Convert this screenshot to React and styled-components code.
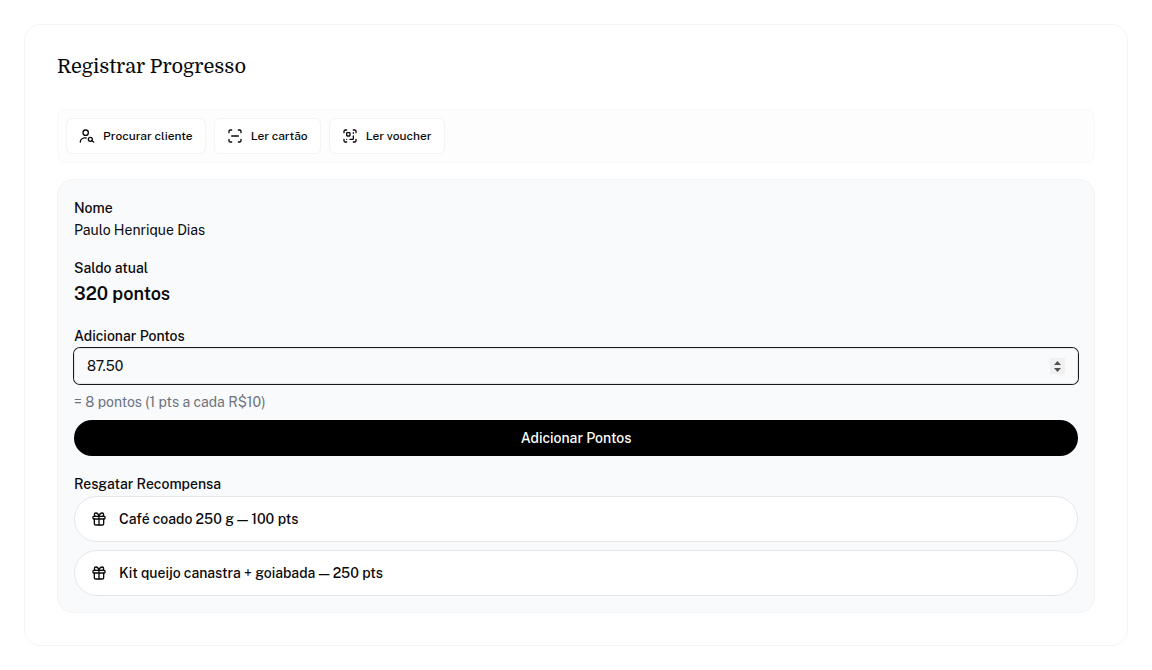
import React, { useState } from 'react'
import styled, { createGlobalStyle } from 'styled-components'
import { ScanLine, ScanQrCode, Gift } from 'lucide-react'

const GlobalStyle = createGlobalStyle`
  *, *::before, *::after {
    box-sizing: border-box;
  }

  body {
    margin: 0;
    background: #fff;
    color: #09090b;
    font-family: 'Public Sans', Inter, 'Liberation Sans', sans-serif;
    font-size: 14px;
    line-height: 20px;
  }

  button, input {
    font: inherit;
    color: inherit;
  }

  button {
    cursor: pointer;
  }
`

const Page = styled.main`
  padding: 24px;
`

const Card = styled.section`
  padding: 24px 32px 32px;
  border: 1px solid #f4f4f5;
  border-radius: 16px;
`

const Title = styled.h1`
  margin: 0 0 24px;
  font-family: Domine, 'Noto Serif', 'DejaVu Serif', serif;
  font-size: 20px;
  font-weight: 400;
  line-height: 36px;
`

const Toolbar = styled.div`
  display: flex;
  flex-wrap: wrap;
  gap: 8px;
  margin-bottom: 16px;
  padding: 8px;
  border: 1px solid #f8f8f9;
  border-radius: 8px;
  background: #fdfdfd;
`

const ToolButton = styled.button`
  display: flex;
  align-items: center;
  gap: 8px;
  height: 36px;
  padding: 0 12px;
  border: 1px solid #f4f4f5;
  border-radius: 6px;
  background: #fff;
  font-size: 12px;
  font-weight: 500;
`

const Panel = styled.form`
  display: flex;
  flex-direction: column;
  gap: 16px;
  padding: 16px;
  border: 1px solid #f3f4f6;
  border-radius: 16px;
  background: #f9fafb;
`

const Field = styled.div`
  display: flex;
  flex-direction: column;
`

const Label = styled.label`
  font-weight: 500;
  line-height: 24px;
`

const Value = styled.span`
  font-size: ${props => (props.$large ? '18px' : '14px')};
  font-weight: ${props => (props.$large ? 600 : 400)};
  line-height: ${props => (props.$large ? '28px' : '20px')};
`

const spinner = `url("data:image/svg+xml,%3Csvg xmlns='http://www.w3.org/2000/svg' viewBox='0 0 15 16'%3E%3Cpath fill='%23505050' d='M4 7h7L7.5 3zM4 10h7l-3.5 4z'/%3E%3C/svg%3E")`

const Input = styled.input`
  width: 100%;
  height: 36px;
  padding: 0 12px;
  border: 1px solid #e5e7eb;
  border-radius: 6px;
  outline: none;
  background: transparent;
  box-shadow: 0 0 0 1px #18181b;

  &::-webkit-inner-spin-button {
    appearance: none;
    width: 15px;
    height: 16px;
    background: #f0f0f0 ${spinner} center / 15px 16px no-repeat;
    opacity: 1;
  }
`

const Hint = styled.p`
  margin: 8px 0;
  color: #6b7280;
`

const Submit = styled.button`
  height: 36px;
  border: 0;
  border-radius: 18px;
  background: #000;
  color: #fff;
  font-weight: 500;
`

const RewardList = styled.div`
  display: flex;
  flex-direction: column;
  gap: 8px;
`

const RewardButton = styled.button`
  display: flex;
  align-items: center;
  gap: 12px;
  height: 46px;
  padding: 0 16px;
  border: 1px solid #e5e7eb;
  border-radius: 23px;
  background: #fff;
  font-weight: 500;
  text-align: left;
`

const rewards = [
  { name: 'Café coado 250 g', cost: 100 },
  { name: 'Kit queijo canastra + goiabada', cost: 250 },
]

function UserSearchIcon() {
  return (
    <svg
      width="16"
      height="16"
      viewBox="0 0 24 24"
      fill="none"
      stroke="currentColor"
      strokeWidth="2"
      strokeLinecap="round"
      strokeLinejoin="round"
      aria-hidden="true"
    >
      <circle cx="10" cy="7" r="4" />
      <path d="M2 21v-1a7 7 0 0 1 8.5-5" />
      <circle cx="17" cy="17" r="3" />
      <path d="m22 21-2.5-2" />
    </svg>
  )
}

function App() {
  const [value, setValue] = useState('87.50')
  const points = Math.floor(Number(value) / 10)

  return (
    <>
      <GlobalStyle />
      <Page>
        <Card>
          <Title>Registrar Progresso</Title>

          <Toolbar>
            <ToolButton type="button">
              <UserSearchIcon />
              Procurar cliente
            </ToolButton>
            <ToolButton type="button">
              <ScanLine size={16} />
              Ler cartão
            </ToolButton>
            <ToolButton type="button">
              <ScanQrCode size={16} />
              Ler voucher
            </ToolButton>
          </Toolbar>

          <Panel onSubmit={e => e.preventDefault()}>
            <Field>
              <Label as="span">Nome</Label>
              <Value>Paulo Henrique Dias</Value>
            </Field>

            <Field>
              <Label as="span">Saldo atual</Label>
              <Value $large>320 pontos</Value>
            </Field>

            <Field>
              <Label htmlFor="pontos">Adicionar Pontos</Label>
              <Input
                id="pontos"
                type="number"
                step="0.01"
                value={value}
                onChange={e => setValue(e.target.value)}
              />
              <Hint>= {points} pontos (1 pts a cada R$10)</Hint>
              <Submit type="submit">Adicionar Pontos</Submit>
            </Field>

            <Field>
              <Label as="span">Resgatar Recompensa</Label>
              <RewardList>
                {rewards.map(reward => (
                  <RewardButton key={reward.name} type="button">
                    <Gift size={16} />
                    {`${reward.name} — ${reward.cost} pts`}
                  </RewardButton>
                ))}
              </RewardList>
            </Field>
          </Panel>
        </Card>
      </Page>
    </>
  )
}

export default App
